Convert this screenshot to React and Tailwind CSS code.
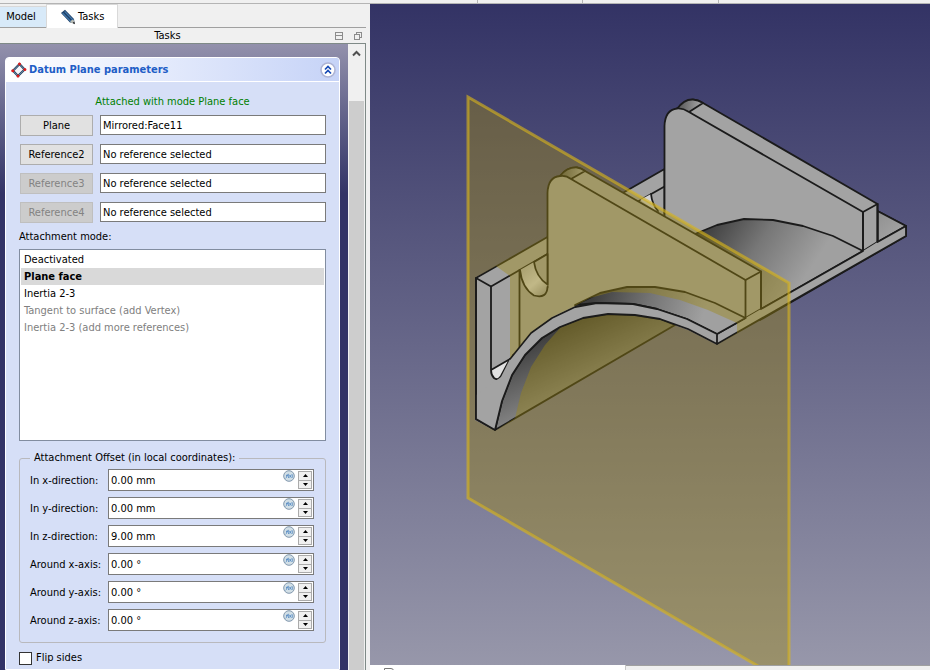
import { useState } from 'react'

const references = [
  { label: 'Plane', value: 'Mirrored:Face11' },
  { label: 'Reference2', value: 'No reference selected' },
  { label: 'Reference3', value: 'No reference selected', disabled: true },
  { label: 'Reference4', value: 'No reference selected', disabled: true },
]

const modes = [
  { label: 'Deactivated' },
  { label: 'Plane face' },
  { label: 'Inertia 2-3' },
  { label: 'Tangent to surface (add Vertex)', disabled: true },
  { label: 'Inertia 2-3 (add more references)', disabled: true },
]

const offsets = [
  { id: 'x', label: 'In x-direction:', value: '0.00 mm' },
  { id: 'y', label: 'In y-direction:', value: '0.00 mm' },
  { id: 'z', label: 'In z-direction:', value: '9.00 mm' },
  { id: 'rx', label: 'Around x-axis:', value: '0.00 °' },
  { id: 'ry', label: 'Around y-axis:', value: '0.00 °' },
  { id: 'rz', label: 'Around z-axis:', value: '0.00 °' },
]

function PencilIcon() {
  return (
    <svg width="16" height="16" viewBox="0 0 16 16">
      <path d="M1 4 L5 .8 L14 10 L14.5 14.6 L10 13.4 Z" fill="#1d3f66" />
      <path d="M2.5 4 L11 12.6 M4.6 2.4 L13 11" stroke="#4377ab" strokeWidth="1.3" />
      <path d="M10 13.4 L11 11.6 L13.6 10.6 L14.5 14.6 Z" fill="#b9bdb6" />
      <path d="M12.6 14 L14.2 12.6 L15 15.2 Z" fill="#1c1c1c" />
    </svg>
  )
}

function DatumIcon() {
  return (
    <svg width="16" height="16" viewBox="0 0 16 16">
      <path d="M8.5 2 L13.6 7.5 L7 14 L2 8.8 Z" fill="#f4f6fb" stroke="#2b4258" strokeWidth="2.2" />
      <path d="M8.5 2 L13.6 7.5 L7 14 L2 8.8 Z" fill="none" stroke="#6f9ac6" strokeWidth=".8" />
      <g fill="#dd1c1c">
        <circle cx="8.5" cy="2" r="1.5" />
        <circle cx="13.9" cy="7.6" r="1.5" />
        <circle cx="7" cy="14" r="1.5" />
        <circle cx="1.8" cy="8.8" r="1.5" />
      </g>
    </svg>
  )
}

function FxIcon() {
  return (
    <svg width="12" height="12" viewBox="0 0 12 12">
      <circle cx="6" cy="6" r="5.3" fill="#d2dfe6" stroke="#8298ad" />
      <path
        d="M2.6 8.4 C3.8 8.4 3.6 4 5 3.8 M3 5.6 H5 M5.6 4.2 Q4.8 6 5.6 8 M6.3 4.8 L8.2 7.6 M8.2 4.8 L6.3 7.6 M9 4.2 Q9.8 6 9 8"
        fill="none"
        stroke="#4f86c2"
        strokeWidth=".8"
      />
    </svg>
  )
}

function Tabs() {
  return (
    <div className="flex h-6 items-end">
      <button className="h-[22px] w-[46px] border-t border-b border-t-[#d9d9d9] border-b-[#a0a0a0] bg-[#d8eaf9] pr-1">Model</button>
      <button className="flex h-6 w-[72px] items-center gap-[2px] border-x border-t border-[#d9d9d9] bg-white pt-px pl-[13px]">
        <PencilIcon />
        Tasks
      </button>
      <div className="h-6 flex-1 border-b border-[#a0a0a0]" />
    </div>
  )
}

function TitleBar() {
  return (
    <div className="flex h-[15px] items-center pt-px">
      <h1 className="flex-1 text-center">Tasks</h1>
      <div className="flex gap-[10px] pr-[3px]">
        <button aria-label="Collapse">
          <svg width="9" height="9" viewBox="0 0 9 9" fill="none" stroke="#8c8c8c">
            <rect x=".5" y=".5" width="7" height="7" />
            <path d="M1 3.5 H8" />
          </svg>
        </button>
        <button aria-label="Float">
          <svg width="9" height="9" viewBox="0 0 9 9" fill="none" stroke="#8c8c8c">
            <rect x="2.5" y=".5" width="5" height="5" />
            <rect x=".5" y="2.5" width="5" height="5" fill="#f0f0f0" />
          </svg>
        </button>
      </div>
    </div>
  )
}

function ReferenceRow({ label, value, disabled }) {
  return (
    <div className="flex h-[21px] items-start gap-[7px]">
      <button
        disabled={disabled}
        className="h-[21px] w-[73px] border border-[#adadad] bg-[#e1e1e1] disabled:border-[#bfbfbf] disabled:bg-[#cccccc] disabled:text-[#838383]"
      >
        {label}
      </button>
      <input
        aria-label={label}
        defaultValue={value}
        className="h-5 min-w-0 flex-1 border border-[#7a7a7a] bg-white px-[2px] outline-none"
      />
    </div>
  )
}

function OffsetRow({ id, label, value }) {
  return (
    <div className="flex h-[22px] items-center">
      <label htmlFor={id} className="w-[78px] pt-[2px] whitespace-nowrap">{label}</label>
      <div className="flex h-[22px] min-w-0 flex-1 border border-[#7a7a7a] bg-white pr-px">
        <input id={id} defaultValue={value} className="min-w-0 flex-1 px-[2px] pt-[2px] outline-none" />
        <button aria-label="Expression" className="mr-[3px] self-start">
          <FxIcon />
        </button>
        <div className="flex w-[14px] flex-col py-px">
          <button aria-label="Increase" className="flex flex-1 items-center justify-center border border-[#ababab] bg-[#f0f0f0]">
            <svg width="5" height="3" viewBox="0 0 5 3"><path d="M2.5 0 L5 3 H0 Z" /></svg>
          </button>
          <button aria-label="Decrease" className="flex flex-1 items-center justify-center border border-t-0 border-[#ababab] bg-[#f0f0f0]">
            <svg width="5" height="3" viewBox="0 0 5 3"><path d="M2.5 3 L5 0 H0 Z" /></svg>
          </button>
        </div>
      </div>
    </div>
  )
}

function DatumPanel() {
  const [mode, setMode] = useState('Plane face')

  return (
    <section className="min-h-full rounded-t-[4px] border border-white bg-[#d6dff7]">
      <header className="flex h-6 items-center gap-[2px] rounded-t-[3px] border-b border-white bg-linear-to-r from-white to-[#c6d3f7] pr-[3px] pl-[5px]">
        <DatumIcon />
        <h2 className="flex-1 font-bold text-[#215dc6]">Datum Plane parameters</h2>
        <button aria-label="Collapse panel">
          <svg width="16" height="16" viewBox="0 0 16 16" fill="none">
            <circle cx="8" cy="8" r="7" fill="#fff" stroke="#aeb4d4" strokeWidth="1.6" />
            <path d="M5 7.5 L8 4.5 L11 7.5 M5 11.5 L8 8.5 L11 11.5" stroke="#1549b5" strokeWidth="1.7" />
          </svg>
        </button>
      </header>
      <div className="px-[13px] pt-[13px]">
        <p className="text-center text-[#008000]">Attached with mode Plane face</p>
        <div className="mt-[6px] flex flex-col gap-2 pl-px">
          {references.map((r) => (
            <ReferenceRow key={r.label} {...r} />
          ))}
        </div>
        <p id="mode-label" className="mt-[7px]">Attachment mode:</p>
        <ul role="listbox" aria-labelledby="mode-label" className="mt-[5px] h-48 border border-[#828da0] bg-white p-px">
          {modes.map((m) => (
            <li
              key={m.label}
              role="option"
              aria-selected={m.label === mode}
              aria-disabled={m.disabled}
              onClick={() => !m.disabled && setMode(m.label)}
              className="h-[17px] px-[3px] leading-[17px] aria-disabled:text-[#808080] aria-selected:bg-[#d9d9d9] aria-selected:font-bold"
            >
              {m.label}
            </li>
          ))}
        </ul>
        <fieldset className="mt-[10px] rounded-[3px] border border-[#b9b9bd] px-[10px] pr-[11px] pb-[11px]">
          <legend className="px-1">Attachment Offset (in local coordinates):</legend>
          <div className="flex flex-col gap-[6px] pt-1">
            {offsets.map((o) => (
              <OffsetRow key={o.id} {...o} />
            ))}
          </div>
        </fieldset>
        <label className="mt-2 flex items-center gap-1">
          <input type="checkbox" className="size-[13px] appearance-none border border-[#333333] bg-white checked:bg-[#333333]" />
          Flip sides
        </label>
      </div>
    </section>
  )
}

function ScrollBar() {
  return (
    <div className="flex w-[17px] flex-col bg-[#f0f0f0] px-px">
      <svg width="15" height="17" viewBox="0 0 15 17" fill="none">
        <path d="M4 11.5 L7.5 8 L11 11.5" stroke="#505050" strokeWidth="2" />
      </svg>
      <div className="mt-10 flex-1 bg-[#cdcdcd]" />
    </div>
  )
}

function Model() {
  return (
    <g fill="#a3a3a3" stroke="#1b1b1b" strokeWidth="1.8" strokeLinejoin="round" strokeLinecap="round">
      {/* rear bracket */}
      <path d="M664.5 169 L600 206 L664.5 250 Z" />
      <path d="M664.5 186.500 L630 206" />
      <path d="M651 194 L640 200 L657 212 Q652 204 651 194 Z" fill="#d2d2d2" stroke="none" />
      <path d="M651 194 Q652 204 658 211" fill="none" />
      <path d="M877.5 211 L906 226 L906 236 L760 320 L761 309 L877.5 242 Z" />
      <path d="M877.5 211 L906 226 L877.5 242 Z" fill="url(#foot)" />
      <path d="M677 108.500 L689 100.500 Q695 98 703 103 L877.5 204 L877.5 242 L863 251 L689 112 Z" />
      <path d="M677 109 Q684 99 693 99.500 Q698 100 703 103 L689 112 Z" fill="url(#round)" />
      <path d="M664.500 240 L664.500 126 Q665 110 677 108.500 Q683 108 689 112 L863 212 L863 251 L800 290 Z" />
      <path d="M863 212 L877.500 204" />
      <path d="M863 251 L833 236 L803 226 L773 220 L744 219 L717 225 L690 236 L761 309 Z" fill="url(#rearArch)" />
      <path d="M863 212 L863 251 M877.500 204 V242" />

      {/* left rib of the front bracket */}
      <path d="M476 278 L547.5 237 L600 300 L513 355 L495 430 L476 419 Z" />
      <path d="M476 278 L491 286.500 L547.500 254" fill="none" />
      <path d="M491 370 L510 359 L500 377 Q497 381 493 376 Z" fill="#e2e2e2" stroke="none" />
      <path d="M491 286.500 V370 Q491 375 494 378 Q498 381 501 376 L510 359 L491 370" fill="none" />

      {/* front plate */}
      <path d="M560 176 Q567 167 577 167.500 Q581 168 585 171 L761 271.500 L761 309 L745.500 318 L571 179 Z" />
      <path d="M560 176 Q567 167 577 167.500 Q581 168 585 171 L571 179 Z" fill="url(#roundFront)" />
      <path
        d="M547.500 287 V193 Q548 177 560 176 Q566 175 571 179 L745.500 280 V318 L715 320 L575 312 L530 335 L519.500 347 L519.500 296 L536 297 Q547 297 547.500 287 Z"
        stroke="none"
      />
      <path d="M547.500 287 V193 Q548 177 560 176 Q566 175 571 179 L745.500 280 V318" fill="none" />
      <path d="M745.500 280 L761 271.500 V309" fill="none" />
      <path d="M520 270 Q522 288 534 295.500 Q547 299 547.500 287 L547.500 254 L534 262 Z" fill="url(#slot)" stroke="none" />
      <path d="M534 262 Q536 277 547.500 284.500 L547.500 254 Z" />
      <path d="M520 270 Q522 288 534 295.500 Q547 299 547.500 287 M519.500 270 V347" fill="none" />
      <path d="M717 334 L745.500 318 L761 309 L863 251 L877.500 242 L906 226 V236 L717 344 Z" stroke="none" />
      <path d="M717 334 L745.500 318 M761 309 L863 251 M877.500 242 L906 226 V236 L717 344" fill="none" />

      {/* curved cradle */}
      <path
        d="M745.500 318 L715 303 L685 292 L655 287 L627 287 L600 293 L575 305 L597 303 L633 304 L657 309 L687 319 L717 334 Z"
        fill="url(#archTop)"
      />
      <path
        d="M495 430 L502 401 L512 375 L525 355 L542 338 L560 327 L583 318 L608 314 L635 315 L660 319 L675 325 Z"
        fill="url(#archUnder)"
      />
      <path
        d="M495 430 L476 419 L476 395 L501 377 L510 359 L531 333 L552 318 L575 307 L597 303 L633 304 L657 309 L687 319 L717 334 V344 L688 329 L660 319 L635 315 L608 314 L583 318 L560 327 L542 338 L525 355 L512 375 L502 401 Z"
        stroke="none"
      />
      <path d="M476 278 V419 L495 430 L502 401 L512 375 L525 355 L542 338 L560 327 L583 318 L608 314 L635 315 L660 319 L688 329 L717 344 V334 L687 319 L657 309 L633 304 L597 303 L575 307 L552 318 L531 333 L510 359" fill="none" />
    </g>
  )
}

function Viewport() {
  return (
    <svg className="min-h-0 w-full flex-1" viewBox="370 4 560 661" preserveAspectRatio="xMinYMin slice" role="img" aria-label="3D view">
      <defs>
        <linearGradient id="sky" x1="0" y1="0" x2="0" y2="1">
          <stop offset="0" stopColor="#333365" />
          <stop offset="1" stopColor="#9797aa" />
        </linearGradient>
        <linearGradient id="foot" gradientUnits="userSpaceOnUse" x1="870" y1="205" x2="900" y2="240">
          <stop offset="0" stopColor="#8a8a8a" />
          <stop offset="1" stopColor="#a6a6a6" />
        </linearGradient>
        <linearGradient id="round" gradientUnits="userSpaceOnUse" x1="678" y1="104" x2="700" y2="106">
          <stop offset="0" stopColor="#555555" />
          <stop offset="1" stopColor="#a3a3a3" />
        </linearGradient>
        <linearGradient id="roundFront" gradientUnits="userSpaceOnUse" x1="561" y1="172" x2="583" y2="174">
          <stop offset="0" stopColor="#555555" />
          <stop offset="1" stopColor="#a3a3a3" />
        </linearGradient>
        <linearGradient id="rearArch" gradientUnits="userSpaceOnUse" x1="705" y1="222" x2="800" y2="285">
          <stop offset="0" stopColor="#3a3a3a" />
          <stop offset=".5" stopColor="#777777" />
          <stop offset="1" stopColor="#a0a0a0" />
        </linearGradient>
        <linearGradient id="slot" gradientUnits="userSpaceOnUse" x1="524" y1="268" x2="548" y2="296">
          <stop offset="0" stopColor="#b5b5b5" />
          <stop offset=".5" stopColor="#dadada" />
          <stop offset="1" stopColor="#8c8c8c" />
        </linearGradient>
        <linearGradient id="archTop" gradientUnits="userSpaceOnUse" x1="595" y1="290" x2="700" y2="325">
          <stop offset="0" stopColor="#3e3e3e" />
          <stop offset=".5" stopColor="#757575" />
          <stop offset="1" stopColor="#a0a0a0" />
        </linearGradient>
        <linearGradient id="archUnder" gradientUnits="userSpaceOnUse" x1="548" y1="328" x2="580" y2="400">
          <stop offset="0" stopColor="#383838" />
          <stop offset=".5" stopColor="#626262" />
          <stop offset="1" stopColor="#8a8a8a" />
        </linearGradient>
      </defs>
      <rect x="370" y="4" width="560" height="661" fill="url(#sky)" />
      <Model />
      {/* datum plane, left open where the bracket stands in front of it */}
      <path
        fillRule="evenodd"
        fill="#9d8910"
        fillOpacity=".41"
        d="M468 97 L789 283 V684 L468 498 Z
           M475 277.500 L496 266 L510 276 V358 L531 332 L552 317 L575 306 L590 298 L612 292 L650 293 L680 300 L708 310 L737 323 V333 L717 345 L688 330 L660 320 L635 316 L608 315 L583 319 L560 328 L545 345 L531 367 L521 393 L515 418 L495 431 L475 420 Z"
      />
      <path d="M468 97 L789 283 V684 L468 498 Z" fill="none" stroke="#d8b41c" strokeOpacity=".62" strokeWidth="3" />
    </svg>
  )
}

export default function App() {
  return (
    <div className="flex h-screen flex-col overflow-hidden bg-[#f0f0f0] font-['DejaVu_Sans_Condensed','DejaVu_Sans',sans-serif] text-[11px] leading-[14px] text-black">
      <div className="flex h-1 border-b border-[#b4b4b4]">
        <div className="w-[478px] border-r border-[#b4b4b4]" />
        <div className="w-[105px] border-r border-[#b4b4b4]" />
        <div className="w-[136px] border-r border-[#b4b4b4]" />
      </div>
      <main className="flex min-h-0 flex-1">
        <aside className="flex w-[370px] shrink-0 flex-col pr-1">
          <Tabs />
          <TitleBar />
          <div className="flex min-h-0 flex-1 border-t border-r border-[#7f8a87]">
            <div className="min-w-0 flex-1 bg-linear-to-b from-[#9391ac] to-[#333366] to-[150px] pt-[13px] pr-2 pl-[5px]">
              <DatumPanel />
            </div>
            <ScrollBar />
          </div>
        </aside>
        <div className="flex min-w-0 flex-1 flex-col">
          <Viewport />
          <div className="flex h-[5px] overflow-hidden">
            <div className="w-64 border-r border-[#c8c8c8] bg-white pt-[3px] pl-[14px]">
              <div className="h-3 w-[10px] rounded-tr-[3px] border border-[#777777]" />
            </div>
            <div className="flex-1 border-t border-[#a0a0a0]" />
          </div>
        </div>
      </main>
    </div>
  )
}
